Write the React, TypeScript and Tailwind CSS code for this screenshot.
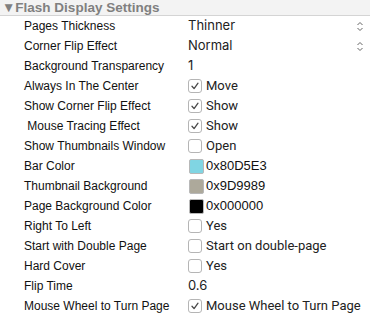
import React from 'react';

type Row =
  | { label: string; kind: 'select'; value: string }
  | { label: string; kind: 'text'; value: string }
  | { label: string; kind: 'check'; value: string; checked: boolean }
  | { label: string; kind: 'color'; value: string; color: string };

const rows: Row[] = [
  { label: 'Pages Thickness', kind: 'select', value: 'Thinner' },
  { label: 'Corner Flip Effect', kind: 'select', value: 'Normal' },
  { label: 'Background Transparency', kind: 'text', value: '1' },
  { label: 'Always In The Center', kind: 'check', value: 'Move', checked: true },
  { label: 'Show Corner Flip Effect', kind: 'check', value: 'Show', checked: true },
  { label: '\u00a0Mouse Tracing Effect', kind: 'check', value: 'Show', checked: true },
  { label: 'Show Thumbnails Window', kind: 'check', value: 'Open', checked: false },
  { label: 'Bar Color', kind: 'color', value: '0x80D5E3', color: '#80D5E3' },
  { label: 'Thumbnail Background', kind: 'color', value: '0x9D9989', color: '#ADA99B' },
  { label: 'Page Background Color', kind: 'color', value: '0x000000', color: '#000000' },
  { label: 'Right To Left', kind: 'check', value: 'Yes', checked: false },
  { label: 'Start with Double Page', kind: 'check', value: 'Start on double-page', checked: false },
  { label: 'Hard Cover', kind: 'check', value: 'Yes', checked: false },
  { label: 'Flip Time', kind: 'text', value: '0.6' },
  { label: 'Mouse Wheel to Turn Page', kind: 'check', value: 'Mouse Wheel to Turn Page', checked: true },
];

function Checkbox({ checked }: { checked: boolean }) {
  return (
    <span className="flex h-[14px] w-[14px] shrink-0 items-center justify-center rounded-[3px] border border-[#b5b5b5] bg-white">
      {checked && (
        <svg width="10" height="10" viewBox="0 0 10 10" fill="none">
          <path d="M2 5.2 L4.1 7.6 L8 2.2" stroke="#4a4a4a" strokeWidth="1.3" strokeLinecap="round" strokeLinejoin="round" />
        </svg>
      )}
    </span>
  );
}

function Value({ row }: { row: Row }) {
  const text = 'text-[13px] text-[#222] font-["Inter",sans-serif]';
  const checkText = 'text-[13px] text-[#222] font-["Roboto",sans-serif]';
  if (row.kind === 'select') {
    return (
      <div className="flex flex-1 items-center justify-between pr-[2px]">
        <span className={text}>{row.value}</span>
        <svg width="8" height="11" viewBox="0 0 8 11" fill="none">
          <path d="M1.5 4 L4 1.5 L6.5 4 M1.5 7 L4 9.5 L6.5 7" stroke="#666" strokeWidth="1" />
        </svg>
      </div>
    );
  }
  if (row.kind === 'text') return <span className={text}>{row.value}</span>;
  if (row.kind === 'check') {
    return (
      <div className="flex items-center gap-[4px]">
        <Checkbox checked={row.checked} />
        <span className={checkText}>{row.value}</span>
      </div>
    );
  }
  return (
    <div className="flex items-center gap-[2px] pl-px">
      <span
        className="h-[15px] w-[15px] shrink-0 rounded-[2px] border border-[#b8b8b8]"
        style={{ backgroundColor: row.color }}
      />
      <span className='text-[13px] text-[#111] font-["Liberation_Sans",Arial,sans-serif]'>{row.value}</span>
    </div>
  );
}

export default function App() {
  return (
    <div className="h-[316px] w-[370px] overflow-hidden bg-white">
      <div className="flex h-[16px] items-center border-b border-[#d4d4d4] bg-[#f3f3f3] pl-[2px]">
        <span className='text-[13.5px] font-bold leading-none text-[#808080] font-["Liberation_Sans",Arial,sans-serif]'>
          ▼Flash Display Settings
        </span>
      </div>
      <div className="flex flex-col">
        {rows.map((row, i) => (
          <div key={i} className="flex h-[20px] items-center">
            <span className='w-[188px] shrink-0 whitespace-pre pl-[24px] text-[12px] text-[#111] font-["Liberation_Sans",Arial,sans-serif]'>
              {row.label}
            </span>
            <div className="flex flex-1 items-center pr-[4px]">
              <Value row={row} />
            </div>
          </div>
        ))}
      </div>
    </div>
  );
}
